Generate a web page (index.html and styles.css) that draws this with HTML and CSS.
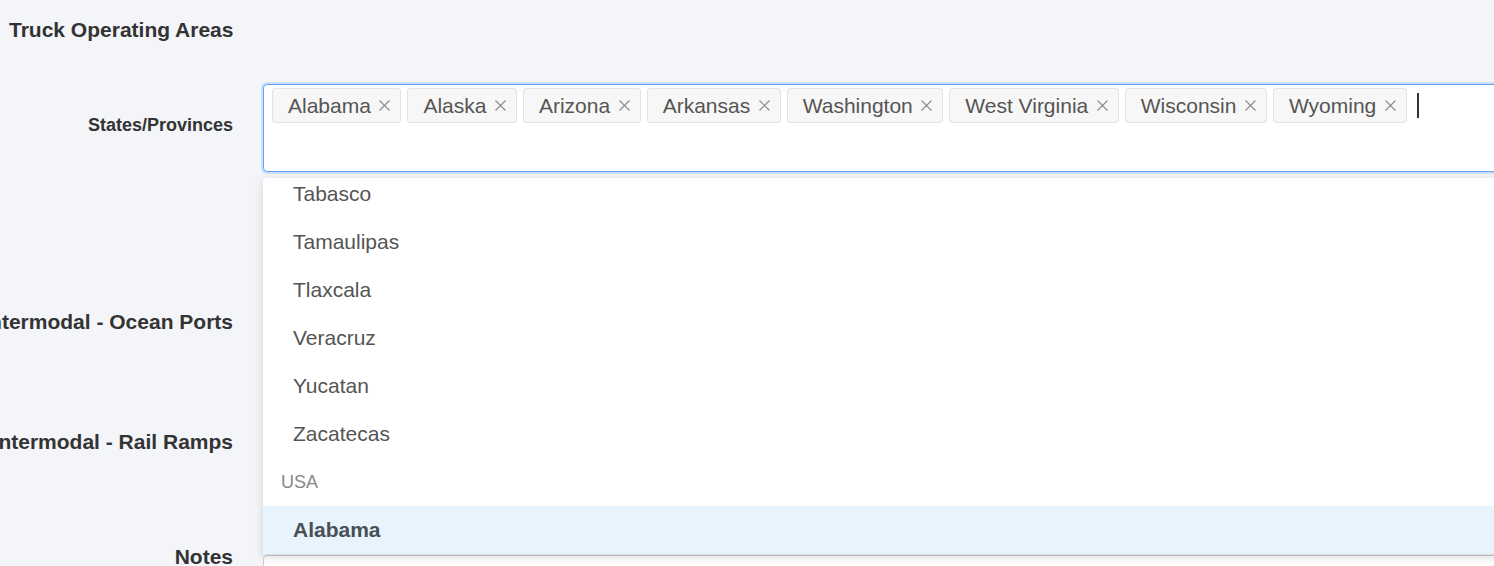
FILE: index.html
```html
<!DOCTYPE html>
<html lang="en">
<head>
<meta charset="utf-8">
<title>Truck Operating Areas</title>
<link rel="stylesheet" href="styles.css">
</head>
<body>
<div class="page">
  <h2 class="section-title">Truck Operating Areas</h2>

  <div class="form-row row-states">
    <label class="row-label small">States/Provinces</label>
    <div class="field">
      <div class="multi-select">
        <span class="tag">Alabama<span class="tag-x"><svg viewBox="0 0 11 11"><path d="M0.5 0.5L10.5 10.5M10.5 0.5L0.5 10.5"/></svg></span></span>
        <span class="tag">Alaska<span class="tag-x"><svg viewBox="0 0 11 11"><path d="M0.5 0.5L10.5 10.5M10.5 0.5L0.5 10.5"/></svg></span></span>
        <span class="tag">Arizona<span class="tag-x"><svg viewBox="0 0 11 11"><path d="M0.5 0.5L10.5 10.5M10.5 0.5L0.5 10.5"/></svg></span></span>
        <span class="tag">Arkansas<span class="tag-x"><svg viewBox="0 0 11 11"><path d="M0.5 0.5L10.5 10.5M10.5 0.5L0.5 10.5"/></svg></span></span>
        <span class="tag">Washington<span class="tag-x"><svg viewBox="0 0 11 11"><path d="M0.5 0.5L10.5 10.5M10.5 0.5L0.5 10.5"/></svg></span></span>
        <span class="tag">West Virginia<span class="tag-x"><svg viewBox="0 0 11 11"><path d="M0.5 0.5L10.5 10.5M10.5 0.5L0.5 10.5"/></svg></span></span>
        <span class="tag">Wisconsin<span class="tag-x"><svg viewBox="0 0 11 11"><path d="M0.5 0.5L10.5 10.5M10.5 0.5L0.5 10.5"/></svg></span></span>
        <span class="tag">Wyoming<span class="tag-x"><svg viewBox="0 0 11 11"><path d="M0.5 0.5L10.5 10.5M10.5 0.5L0.5 10.5"/></svg></span></span>
        <span class="caret"></span>
      </div>
      <div class="dropdown">
        <ul class="options">
          <li class="option">Tabasco</li>
          <li class="option">Tamaulipas</li>
          <li class="option">Tlaxcala</li>
          <li class="option">Veracruz</li>
          <li class="option">Yucatan</li>
          <li class="option">Zacatecas</li>
          <li class="group">USA</li>
          <li class="option active">Alabama</li>
        </ul>
      </div>
    </div>
  </div>

  <div class="form-row row-ocean">
    <label class="row-label">Intermodal - Ocean Ports</label>
    <div class="field"><div class="plain-input"></div></div>
  </div>

  <div class="form-row row-rail">
    <label class="row-label">Intermodal - Rail Ramps</label>
    <div class="field"><div class="plain-input"></div></div>
  </div>

  <div class="form-row row-notes">
    <label class="row-label">Notes</label>
    <div class="field"><div class="textarea"></div></div>
  </div>
</div>
</body>
</html>
```

FILE: styles.css
```css
html, body {
  margin: 0;
  padding: 0;
  overflow: hidden;
  background: #f4f5f9;
  height: 566px;
}

.page {
  font-family: "Liberation Sans", Arial, Helvetica, sans-serif;
  color: #333;
}

.section-title {
  margin: 0;
  padding: 18px 9px 0;
  font-size: 21px;
  line-height: 24px;
  font-weight: bold;
  color: #333;
  white-space: nowrap;
}

.form-row {
  display: grid;
  grid-template-columns: 233px 1300px;
  column-gap: 30px;
  align-items: center;
}

.row-label {
  display: flex;
  justify-content: flex-end;
  white-space: nowrap;
  font-size: 21px;
  line-height: 24px;
  font-weight: bold;
  color: #333;
}

.row-label.small {
  font-size: 18px;
  line-height: 22px;
}

.field {
  position: relative;
}

.row-states {
  margin-top: 42px;
  align-items: start;
}

.row-states .row-label {
  padding-top: 30px;
}

.multi-select {
  box-sizing: border-box;
  height: 88px;
  background: #fff;
  border: 1px solid #5ea2ef;
  border-radius: 4px;
  box-shadow: 0 0 0 2px #cfe0f6;
  padding: 3px 8px;
  display: flex;
  flex-wrap: wrap;
  align-content: flex-start;
  align-items: center;
  gap: 6px;
}

.tag {
  box-sizing: border-box;
  height: 35px;
  display: inline-flex;
  align-items: center;
  padding: 0 10px 0 15px;
  background: #f7f7f7;
  border: 1px solid #e3e3e3;
  border-radius: 3px;
  font-size: 21px;
  color: #555;
  white-space: nowrap;
}

.tag-x {
  display: inline-flex;
  margin-left: 8.5px;
  width: 11px;
  height: 11px;
}

.tag-x svg {
  width: 11px;
  height: 11px;
  fill: none;
  stroke: #8a8a8a;
  stroke-width: 1.1;
}

.caret {
  width: 2px;
  height: 25px;
  background: #333;
  margin-left: 4px;
}

.dropdown {
  position: absolute;
  top: calc(100% + 6px);
  left: 0;
  width: 100%;
  height: 376px;
  background: #fff;
  border-radius: 4px 4px 0 0;
  box-shadow: 0 3px 10px rgba(0, 0, 0, 0.15);
  overflow: hidden;
  z-index: 10;
}

.options {
  list-style: none;
  margin: -8px 0 0;
  padding: 0;
}

.option {
  height: 48px;
  line-height: 48px;
  padding-left: 30px;
  font-size: 21px;
  color: #555;
}

.option.active {
  background: #e8f4fd;
  font-weight: bold;
  color: #4a4f55;
}

.group {
  height: 48px;
  line-height: 48px;
  padding-left: 18px;
  font-size: 18px;
  color: #888;
}

.row-ocean {
  margin-top: 130px;
}

.row-rail {
  margin-top: 80px;
}

.plain-input {
  box-sizing: border-box;
  height: 40px;
  background: #fff;
  border: 1px solid #ccc;
  border-radius: 4px;
}

.row-notes {
  margin-top: 80px;
  align-items: start;
}

.row-notes .row-label {
  padding-top: 3px;
}

.textarea {
  box-sizing: border-box;
  margin-top: 13px;
  height: 100px;
  background: #fff;
  border: 1px solid #ccc;
  border-radius: 4px;
}
```
